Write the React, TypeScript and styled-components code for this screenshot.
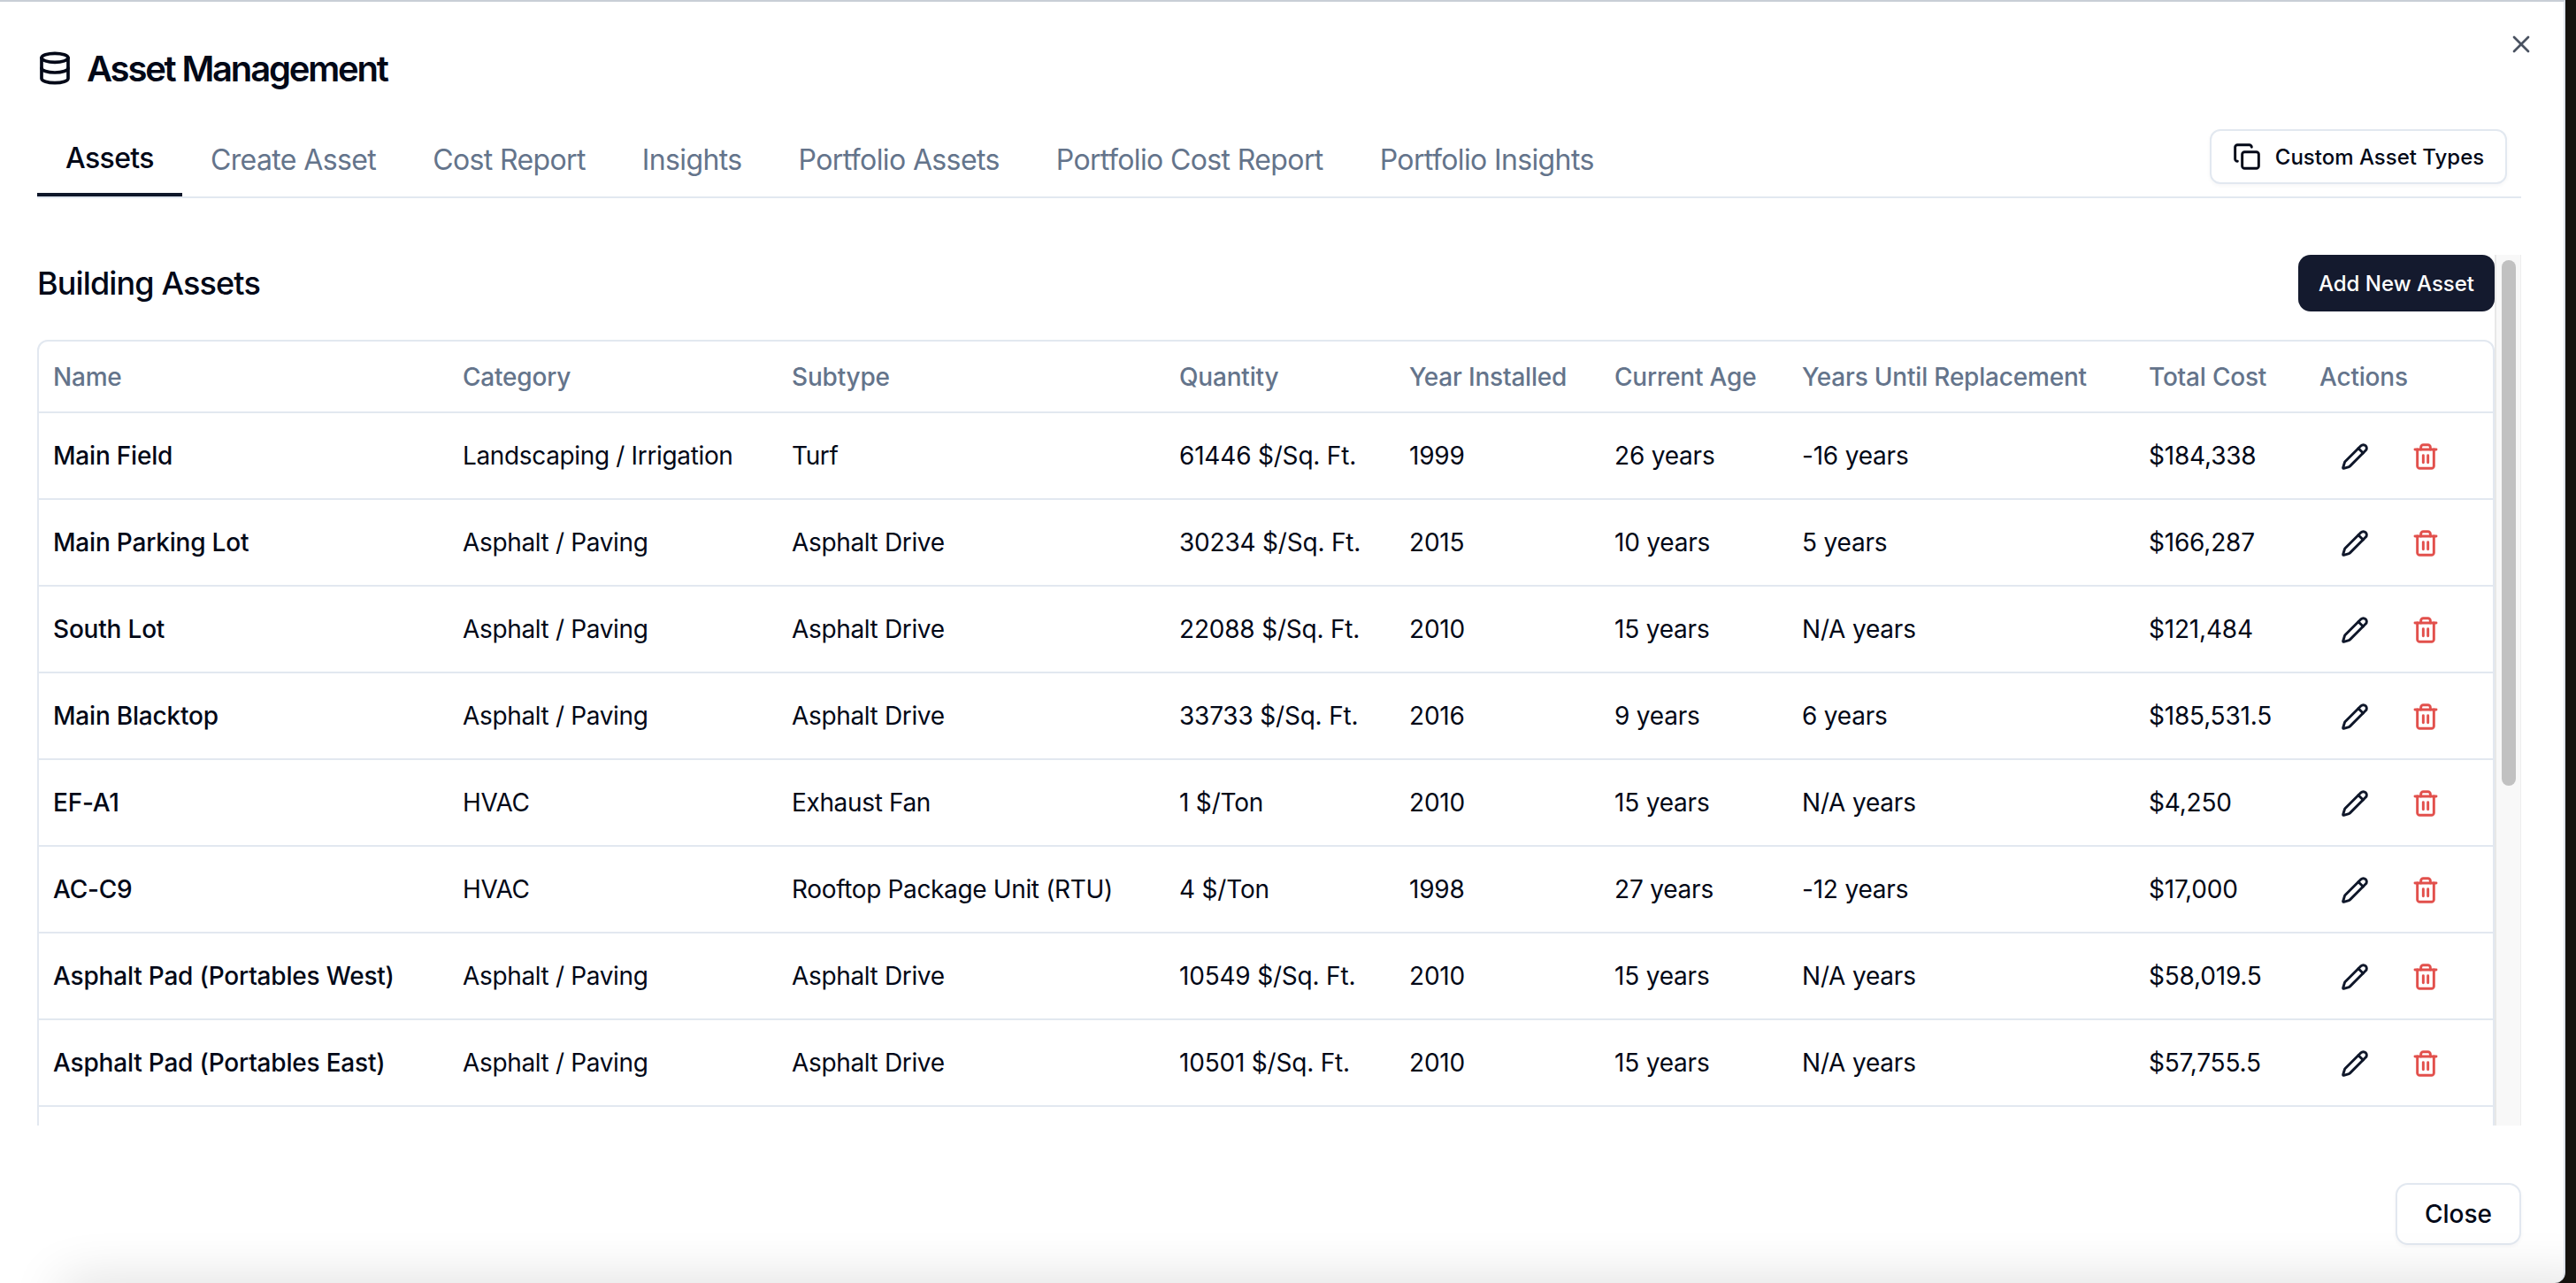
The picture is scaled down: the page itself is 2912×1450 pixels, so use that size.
import styled, { createGlobalStyle } from "styled-components";
import { Copy, Database, Pencil, Trash2, X } from "lucide-react";

const GlobalStyle = createGlobalStyle`
  html, body {
    margin: 0;
    padding: 0;
    background: #15120e;
    overflow: hidden;
  }

  * {
    box-sizing: border-box;
  }
`;

const Page = styled.div`
  width: 2912px;
  height: 1450px;
  padding-right: 12px;
  background: #15120e;
  font-family: Inter, "Liberation Sans", sans-serif;
  color: #020817;
`;

const Dialog = styled.div`
  position: relative;
  height: 100%;
  display: flex;
  flex-direction: column;
  padding: 2px 48px 43px 42px;
  background: #ffffff;
  border-top: 2px solid #c8ced6;
  border-right: 2px solid #dde2ea;
  border-bottom-right-radius: 12px;
  overflow: hidden;

  &::after {
    content: "";
    position: absolute;
    left: 70px;
    right: -40px;
    bottom: -40px;
    height: 40px;
    box-shadow: 0 0 60px rgba(0, 0, 0, 0.16);
  }
`;

const CloseIcon = styled.button`
  position: absolute;
  top: 32px;
  right: 32px;
  padding: 0;
  display: flex;
  border: none;
  background: none;
  color: #4a5261;
`;

const Header = styled.div`
  display: flex;
  align-items: center;
  gap: 16px;
  height: 60px;
  margin-top: 43px;
`;

const Title = styled.h2`
  margin: 0;
  font-size: 40px;
  font-weight: 600;
  letter-spacing: -2.2px;
`;

const TabBar = styled.div`
  display: flex;
  align-items: flex-end;
  justify-content: space-between;
  height: 73px;
  margin-top: 44px;
  border-bottom: 2px solid #e2e8f0;
`;

const Tabs = styled.div`
  display: flex;
  height: 100%;
`;

const Tab = styled.div<{ $active?: boolean }>`
  height: 71px;
  padding: ${(p) => (p.$active ? "8px" : "10px")} 32px 0;
  font-size: 32px;
  line-height: 40px;
  letter-spacing: -0.62px;
  font-weight: ${(p) => (p.$active ? 500 : 400)};
  color: ${(p) => (p.$active ? "#020817" : "#64748b")};
  border-bottom: ${(p) => (p.$active ? "4px solid #0f172a" : "none")};
`;

const OutlineButton = styled.button`
  display: flex;
  align-items: center;
  justify-content: center;
  font-family: inherit;
  font-weight: 500;
  color: #020817;
  background: #ffffff;
  border: 2px solid #e2e8f0;
  border-radius: 12px;
  box-shadow: 0 2px 4px rgba(15, 23, 42, 0.04);
`;

const TypesButton = styled(OutlineButton)`
  gap: 16px;
  width: 336px;
  height: 62px;
  margin-right: 16px;
  margin-bottom: 14px;
  font-size: 24px;
`;

const ScrollRow = styled.div`
  flex: 1;
  min-height: 0;
  display: flex;
  margin-top: 64px;
`;

const ScrollContent = styled.div`
  flex: 1;
  min-width: 0;
  overflow: hidden;
`;

const ScrollRail = styled.div`
  flex: none;
  width: 30px;
  padding: 6px 5px 0 6px;
  background: #f8f8f8;
  border-left: 2px solid #e8e8e8;
  border-right: 1px solid #eeeeee;
`;

const ScrollThumb = styled.div`
  width: 16px;
  height: 594px;
  background: #c1c1c1;
  border-radius: 8px;
`;

const SectionHead = styled.div`
  display: flex;
  align-items: center;
  justify-content: space-between;
  height: 64px;
  margin-bottom: 32px;
`;

const SectionTitle = styled.h3`
  margin: 0;
  font-size: 36px;
  font-weight: 500;
  letter-spacing: -0.87px;
`;

const AddButton = styled.button`
  width: 222px;
  height: 64px;
  font-family: inherit;
  font-size: 24px;
  font-weight: 500;
  color: #ffffff;
  background: #141a2e;
  border: none;
  border-radius: 14px;
`;

const TableFrame = styled.div`
  min-height: 1200px;
  border: 2px solid #e2e8f0;
  border-radius: 12px;
`;

const Table = styled.table`
  width: 100%;
  table-layout: fixed;
  border-collapse: collapse;
  font-size: 28px;
`;

const HeadCell = styled.th`
  height: 80px;
  padding: 0 0 0 16px;
  text-align: left;
  font-weight: 500;
  letter-spacing: -0.2px;
  color: #64748b;
  border-bottom: 2px solid #e2e8f0;
`;

const Cell = styled.td<{ $kind?: "name" | "text" }>`
  height: 98px;
  padding: 0 0 0 16px;
  font-weight: ${(p) => (p.$kind === "name" ? 500 : 400)};
  letter-spacing: ${(p) => (p.$kind === "text" ? "-0.35px" : "-0.2px")};
  white-space: nowrap;
  border-bottom: 2px solid #e2e8f0;
`;

const ActionGroup = styled.div`
  display: flex;
  gap: 8px;
  padding-left: 4px;
`;

const IconButton = styled.button<{ $danger?: boolean }>`
  display: flex;
  align-items: center;
  justify-content: center;
  width: 72px;
  height: 72px;
  padding: 2px 0 0;
  border: none;
  background: none;
  color: ${(p) => (p.$danger ? "#e2504c" : "#0f172a")};
`;

const Footer = styled.div`
  display: flex;
  justify-content: flex-end;
  margin-top: 65px;
`;

const CloseButton = styled(OutlineButton)`
  width: 142px;
  height: 70px;
  font-size: 28px;
  border-radius: 14px;
`;

const tabs = [
  "Assets",
  "Create Asset",
  "Cost Report",
  "Insights",
  "Portfolio Assets",
  "Portfolio Cost Report",
  "Portfolio Insights",
];

const columns = [
  { label: "Name", width: 463 },
  { label: "Category", width: 372 },
  { label: "Subtype", width: 438 },
  { label: "Quantity", width: 260 },
  { label: "Year Installed", width: 232 },
  { label: "Current Age", width: 212 },
  { label: "Years Until Replacement", width: 392 },
  { label: "Total Cost", width: 193 },
  { label: "Actions", width: 212 },
];

const assets = [
  ["Main Field", "Landscaping / Irrigation", "Turf", "61446 $/Sq. Ft.", "1999", "26 years", "-16 years", "$184,338"],
  ["Main Parking Lot", "Asphalt / Paving", "Asphalt Drive", "30234 $/Sq. Ft.", "2015", "10 years", "5 years", "$166,287"],
  ["South Lot", "Asphalt / Paving", "Asphalt Drive", "22088 $/Sq. Ft.", "2010", "15 years", "N/A years", "$121,484"],
  ["Main Blacktop", "Asphalt / Paving", "Asphalt Drive", "33733 $/Sq. Ft.", "2016", "9 years", "6 years", "$185,531.5"],
  ["EF-A1", "HVAC", "Exhaust Fan", "1 $/Ton", "2010", "15 years", "N/A years", "$4,250"],
  ["AC-C9", "HVAC", "Rooftop Package Unit (RTU)", "4 $/Ton", "1998", "27 years", "-12 years", "$17,000"],
  ["Asphalt Pad (Portables West)", "Asphalt / Paving", "Asphalt Drive", "10549 $/Sq. Ft.", "2010", "15 years", "N/A years", "$58,019.5"],
  ["Asphalt Pad (Portables East)", "Asphalt / Paving", "Asphalt Drive", "10501 $/Sq. Ft.", "2010", "15 years", "N/A years", "$57,755.5"],
];

const cellKind = (index: number) => {
  if (index === 0) return "name";
  return index < 3 ? "text" : undefined;
};

const App = () => {
  return (
    <Page>
      <GlobalStyle />
      <Dialog>
        <CloseIcon>
          <X size={32} strokeWidth={2} />
        </CloseIcon>
        <Header>
          <Database size={40} strokeWidth={2.2} />
          <Title>Asset Management</Title>
        </Header>
        <TabBar>
          <Tabs>
            {tabs.map((tab, index) => (
              <Tab key={tab} $active={index === 0}>
                {tab}
              </Tab>
            ))}
          </Tabs>
          <TypesButton>
            <Copy size={32} strokeWidth={2.2} />
            Custom Asset Types
          </TypesButton>
        </TabBar>
        <ScrollRow>
          <ScrollContent>
            <SectionHead>
              <SectionTitle>Building Assets</SectionTitle>
              <AddButton>Add New Asset</AddButton>
            </SectionHead>
            <TableFrame>
              <Table>
                <colgroup>
                  {columns.map((column) => (
                    <col key={column.label} style={{ width: column.width }} />
                  ))}
                </colgroup>
                <thead>
                  <tr>
                    {columns.map((column) => (
                      <HeadCell key={column.label}>{column.label}</HeadCell>
                    ))}
                  </tr>
                </thead>
                <tbody>
                  {assets.map((asset) => (
                    <tr key={asset[0]}>
                      {asset.map((value, index) => (
                        <Cell key={index} $kind={cellKind(index)}>
                          {value}
                        </Cell>
                      ))}
                      <Cell>
                        <ActionGroup>
                          <IconButton>
                            <Pencil size={32} strokeWidth={2.2} />
                          </IconButton>
                          <IconButton $danger>
                            <Trash2 size={32} strokeWidth={2.2} />
                          </IconButton>
                        </ActionGroup>
                      </Cell>
                    </tr>
                  ))}
                </tbody>
              </Table>
            </TableFrame>
          </ScrollContent>
          <ScrollRail>
            <ScrollThumb />
          </ScrollRail>
        </ScrollRow>
        <Footer>
          <CloseButton>Close</CloseButton>
        </Footer>
      </Dialog>
    </Page>
  );
};

export default App;
